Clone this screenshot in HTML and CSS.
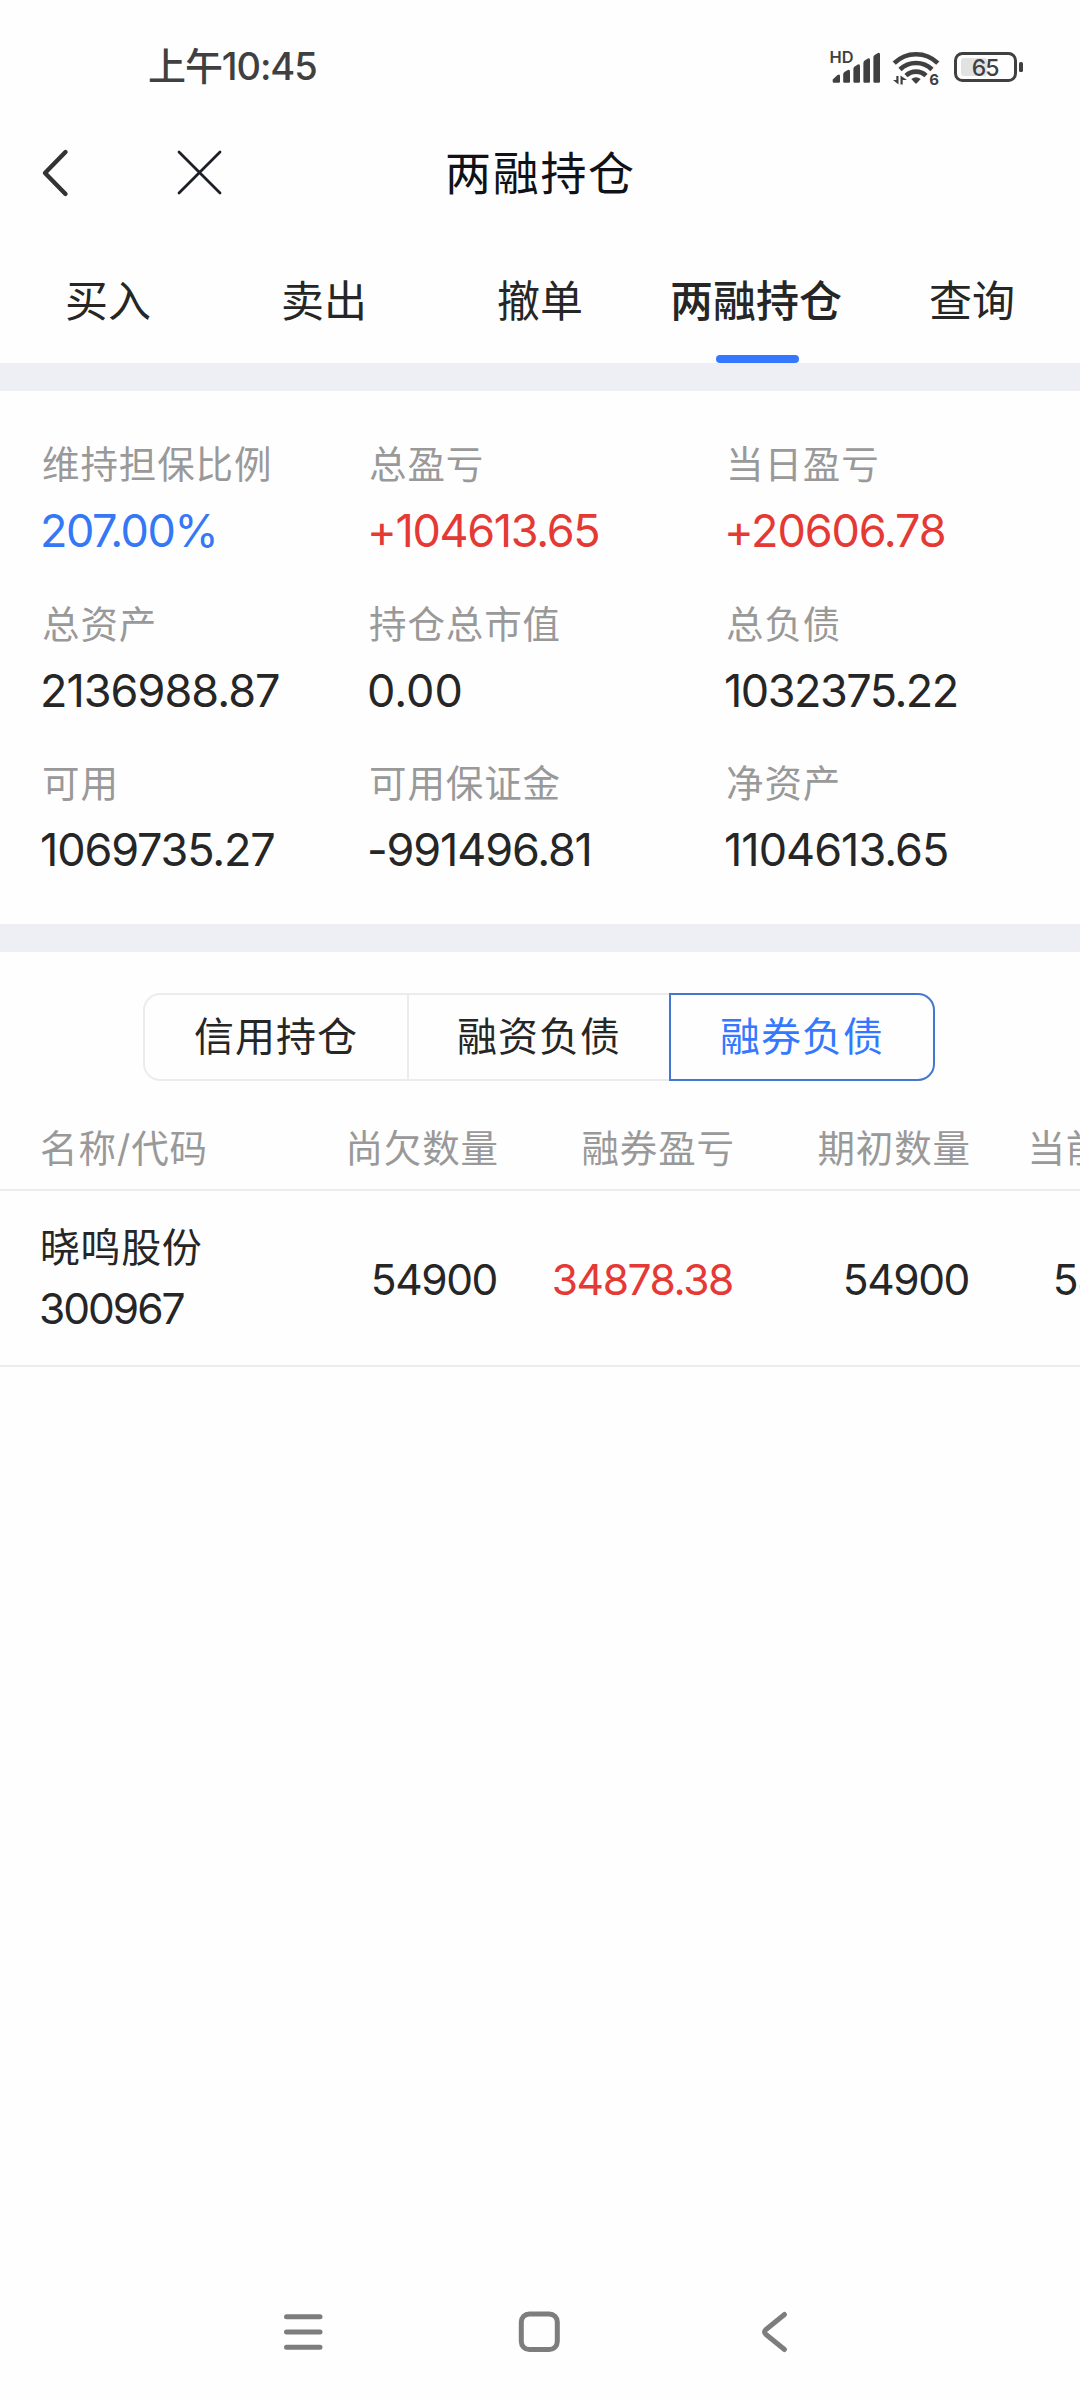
FILE: index.html
```html
<!DOCTYPE html>
<html lang="zh-CN">
<head>
<meta charset="utf-8">
<title>两融持仓</title>
<link rel="stylesheet" href="styles.css">
</head>
<body>
<div class="screen">
  <header class="status">
    <span class="clock">上午10:45</span>
    <svg class="status-icons" width="196" height="40" viewBox="828 48 196 40">
      <text class="hd-text" x="829.600" y="63" textLength="24" lengthAdjust="spacingAndGlyphs">HD</text>
      <g fill="#404040">
        <path d="M832.700 79.500L837.500 75Q840 73.500 840 76V81.500Q840 82.700 838.800 82.700H833.900Q832.700 82.700 832.700 81.500Z"/>
        <path d="M843.200 74.500Q843.200 72.800 844.500 72L847.800 70Q850 69 850 71.500V81.500Q850 82.700 848.800 82.700H844.400Q843.200 82.700 843.200 81.500Z"/>
        <path d="M853.400 69Q853.400 67.300 854.700 66.500L857.900 64.500Q860 63.500 860 66V81.500Q860 82.700 858.800 82.700H854.600Q853.400 82.700 853.400 81.500Z"/>
        <path d="M863.400 63Q863.400 61.300 864.700 60.500L867.900 58.500Q870 57.500 870 60V81.500Q870 82.700 868.800 82.700H864.600Q863.400 82.700 863.400 81.500Z"/>
        <path d="M873.400 57.500Q873.400 55.800 874.700 55L877.900 53Q880 52 880 54.500V81.500Q880 82.700 878.800 82.700H874.600Q873.400 82.700 873.400 81.500Z"/>
        <path d="M911.300 79Q916 75.500 920.700 79L917 83Q916 84 915 83Z"/>
        <path d="M893 80L898.500 84.500V76H896.300V80ZM900.500 75.500V84.500H902.700V80H907Z"/>
      </g>
      <g fill="none" stroke="#404040" stroke-width="4.600">
        <path d="M894.200 63.200A31 31 0 0 1 937.800 63.200"/>
        <path d="M900 69.500A23 23 0 0 1 932 69.500"/>
        <path d="M906 75.600A14.500 14.500 0 0 1 926 75.600"/>
      </g>
      <text class="wifi-text" x="929.300" y="85">6</text>
      <rect x="961" y="58" width="26" height="18" rx="3" fill="#e2e2e2"/>
      <rect x="955.500" y="53.500" width="60" height="27" rx="7" fill="none" stroke="#404040" stroke-width="3"/>
      <rect x="1019" y="62" width="4" height="10" rx="1.500" fill="#404040"/>
      <text class="battery-text" x="985" y="75.700" text-anchor="middle">65</text>
    </svg>
  </header>

  <div class="titlebar">
    <svg class="back" width="30" height="50" viewBox="0 0 30 50"><path d="M25.500 4L5 25L25.500 46" fill="none" stroke="#333" stroke-width="4.400" stroke-linecap="round" stroke-linejoin="round"/></svg>
    <svg class="close" width="50" height="50" viewBox="0 0 50 50"><path d="M5 4L46 45M46 4L5 45" fill="none" stroke="#1b1e24" stroke-width="2.800" stroke-linecap="round"/></svg>
    <h1 class="title">两融持仓</h1>
  </div>

  <nav class="tabs">
    <span class="tab">买入</span>
    <span class="tab">卖出</span>
    <span class="tab">撤单</span>
    <span class="tab tab-active">两融持仓</span>
    <span class="tab">查询</span>
  </nav>

  <section class="summary">
    <div class="stat"><span class="label">维持担保比例</span><span class="value blue">207.00%</span></div>
    <div class="stat"><span class="label">总盈亏</span><span class="value red loose-1">+104613.65</span></div>
    <div class="stat"><span class="label">当日盈亏</span><span class="value red loose-2">+20606.78</span></div>
    <div class="stat"><span class="label">总资产</span><span class="value loose-3">2136988.87</span></div>
    <div class="stat"><span class="label">持仓总市值</span><span class="value loose-4">0.00</span></div>
    <div class="stat"><span class="label">总负债</span><span class="value">1032375.22</span></div>
    <div class="stat"><span class="label">可用</span><span class="value loose-2">1069735.27</span></div>
    <div class="stat"><span class="label">可用保证金</span><span class="value loose-2">-991496.81</span></div>
    <div class="stat"><span class="label">净资产</span><span class="value loose-3">1104613.65</span></div>
  </section>

  <div class="segments">
    <span class="segment">信用持仓</span>
    <span class="segment">融资负债</span>
    <span class="segment segment-active">融券负债</span>
  </div>

  <div class="table">
    <div class="row head">
      <span class="name">名称/代码</span>
      <span class="cell">尚欠数量</span>
      <span class="cell">融券盈亏</span>
      <span class="cell">期初数量</span>
      <span class="cell">当前数量</span>
    </div>
    <div class="row body">
      <span class="name"><span class="stock">晓鸣股份</span><span class="code">300967</span></span>
      <span class="cell num">54900</span>
      <span class="cell num red">34878.38</span>
      <span class="cell num">54900</span>
      <span class="cell num num-last">54900</span>
    </div>
  </div>

  <footer class="navbar">
    <svg width="510" height="50" viewBox="280 2307 510 50" class="nav-icons">
      <g fill="none" stroke="#7d7d7d" stroke-width="5" stroke-linecap="round" stroke-linejoin="round">
        <path d="M286.500 2316.700H320M286.500 2332H320M286.500 2347.300H320"/>
        <rect x="521.300" y="2314" width="36" height="35.500" rx="8"/>
        <path d="M784.500 2314.500L766 2329.500Q763 2332 766 2334.500L784.500 2349.500"/>
      </g>
    </svg>
  </footer>
</div>
</body>
</html>
```
FILE: styles.css
```css
* { box-sizing: border-box; }

body {
  margin: 0;
  background: #fefefe;
  color: #262626;
  font-family: Inter, "Noto Sans CJK SC", sans-serif;
}

.screen {
  width: 1080px;
  height: 2400px;
  overflow: hidden;
  display: flex;
  flex-direction: column;
}

.status {
  height: 132px;
  padding: 0 56px 0 148px;
  display: flex;
  justify-content: space-between;
  align-items: center;
}

.clock {
  padding-bottom: 5px;
  color: #404040;
  font-size: 38px;
  font-weight: 500;
  letter-spacing: -1.1px;
}

.status-icons {
  display: block;
  margin-top: 4px;
}

.battery-text,
.wifi-text,
.hd-text {
  font-family: Inter, sans-serif;
  fill: #404040;
}

.battery-text {
  font-size: 23px;
  font-weight: 500;
  letter-spacing: -1px;
}

.wifi-text {
  font-size: 15px;
  font-weight: 700;
}

.hd-text {
  font-size: 16px;
  font-weight: 600;
}

.titlebar {
  height: 82px;
  padding-left: 40px;
  display: grid;
  grid-template-columns: 134px 271px 1fr;
  align-items: center;
}

.title {
  margin: 0;
  padding-bottom: 7px;
  color: #0f1218;
  font-size: 46px;
  font-weight: 400;
  letter-spacing: 1.7px;
}

.tabs {
  height: 177px;
  border-bottom: 28px solid #eeeff5;
  display: grid;
  grid-template-columns: repeat(5, 216px);
}

.tab {
  display: flex;
  justify-content: center;
  align-items: center;
  padding-top: 19px;
  font-size: 43px;
  position: relative;
}

.tab-active { font-weight: 500; }

.tab-active::after {
  content: "";
  position: absolute;
  bottom: 0;
  left: 68px;
  width: 83px;
  height: 8px;
  border-radius: 4px;
  background: #3478ff;
}

.summary {
  height: 561px;
  padding: 46px 0 0 41px;
  border-bottom: 28px solid #eeeff5;
  display: grid;
  grid-template-columns: 327px 357px 1fr;
  grid-auto-rows: 159.5px;
}

.stat {
  display: flex;
  flex-direction: column;
}

.label,
.head {
  color: #999;
  font-size: 37.5px;
  letter-spacing: 0.9px;
}

.label {
  padding-left: 1px;
  line-height: 56px;
}

.value {
  margin-left: -1px;
  font-size: 45px;
  line-height: 76px;
  letter-spacing: -1.5px;
}

.loose-1 { letter-spacing: -1.33px; }
.loose-2 { letter-spacing: -1.15px; }
.loose-3 { letter-spacing: -0.98px; }
.loose-4 { letter-spacing: 0; }

.blue { color: #3478f6; }
.red { color: #e53935; }

.segments {
  height: 88px;
  margin: 41px 145px 0 143px;
  display: grid;
  grid-template-columns: 264px 262px 266px;
}

.segment {
  display: flex;
  align-items: center;
  justify-content: center;
  padding-bottom: 6px;
  border: 2px solid #ececec;
  border-right-width: 0;
  font-size: 40px;
  letter-spacing: 1px;
}

.segment:first-child { border-radius: 17px 0 0 17px; }

.segment-active {
  border: 2px solid #4477d0;
  border-radius: 0 17px 17px 0;
  color: #3478ff;
}

.row {
  width: 1180px;
  padding-left: 40px;
  border-bottom: 2px solid #ececec;
  display: grid;
  grid-template-columns: 220px 237px 236px 236px 210px;
  align-items: center;
}

.head {
  height: 110px;
  padding-top: 21px;
}

.head .cell { margin-right: -2px; }

.body { height: 176px; }

.name {
  display: flex;
  flex-direction: column;
}

.cell { text-align: right; }

.stock {
  font-size: 40px;
  letter-spacing: 0.6px;
  line-height: 62px;
}

.code {
  margin-left: -1px;
  font-size: 42.5px;
  letter-spacing: -2px;
  line-height: 60px;
}

.num {
  padding-top: 2px;
  font-size: 42.5px;
  letter-spacing: -1.4px;
}

.num-last {
  margin-right: -2px;
  letter-spacing: -1px;
}

.navbar {
  height: 136px;
  margin-top: auto;
  padding-left: 280px;
  display: flex;
  align-items: center;
}

.nav-icons { display: block; }
```
